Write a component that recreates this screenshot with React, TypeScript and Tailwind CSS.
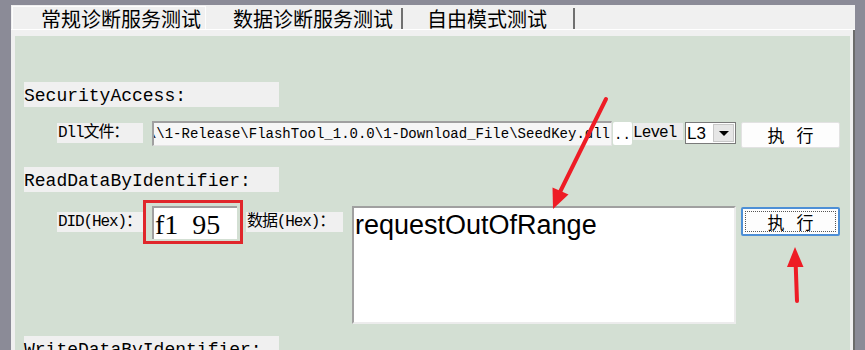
const mono = "font-['Liberation_Mono','Noto_Sans_CJK_SC',monospace]"
const cjk = "font-['Noto_Sans_CJK_SC','Liberation_Sans',sans-serif]"

function Heading({ text }: { text: string }) {
  return (
    <div className={`ml-[9px] w-[255px] h-[25px] bg-[#f0f0f0] flex items-center pt-[2px] text-[18px] leading-none text-black ${mono}`}>
      {text}
    </div>
  )
}

function Label({ text, width }: { text: string; width: number }) {
  return (
    <div
      className={`h-[20px] bg-[#f0f0f0] flex items-center pl-[1px] text-[16px] tracking-[-1.1px] leading-none text-black whitespace-nowrap ${mono}`}
      style={{ width }}
    >
      {text}
    </div>
  )
}

function RunButton({ focused }: { focused?: boolean }) {
  return (
    <div
      className={`w-[99px] rounded-[2px] bg-[#fdfdfd] flex items-center justify-center gap-[12px] text-[17px] text-black ${cjk} ${
        focused ? 'h-[29px] border-2 border-[#4d8fd6] outline outline-1 outline-dotted outline-offset-[-5px] outline-[#555]' : 'h-[26px] border border-[#e2e2e2]'
      }`}
    >
      <span>执</span>
      <span>行</span>
    </div>
  )
}

function Arrows() {
  return (
    <svg className="absolute inset-0 pointer-events-none" width={865} height={350}>
      <line x1={606} y1={99} x2={558} y2={196} stroke="#ee1c25" strokeWidth={4} strokeLinecap="round" />
      <polygon points="553,209 568.5,194.5 552.5,187.5" fill="#ee1c25" />
      <line x1={797} y1={301} x2={795.6} y2={262} stroke="#ee1c25" strokeWidth={4} strokeLinecap="round" />
      <polygon points="795,247 787,267 803.5,267" fill="#ee1c25" />
    </svg>
  )
}

export default function App() {
  return (
    <div className="relative w-[865px] h-[350px] overflow-hidden bg-[#8b8b97] pt-[5px] pl-[11px]">
      <div className="w-[844px] h-[345px] bg-[#f0f0f0] flex flex-col">
        {/* tabs */}
        <div className={`h-[27px] flex items-stretch border-b border-white text-[20px] text-black ${cjk}`}>
          <div className="ml-[1px] mt-[1px] w-[194px] border border-b-0 border-[#fdfdfd] flex items-center pl-[28px] pt-[1px] leading-none">
            常规诊断服务测试
          </div>
          <div className="w-[197px] flex items-center pl-[27px] pt-[1px] leading-none border-r-2 border-r-[#707070] mt-[3px]">
            数据诊断服务测试
          </div>
          <div className="w-[172px] flex items-center pl-[24px] pt-[1px] leading-none border-r-2 border-r-[#707070] mt-[3px]">
            自由模式测试
          </div>
        </div>

        {/* page body */}
        <div className="flex-1 flex pt-[6px] pl-[4px] border-r-2 border-r-[#6b6b6b]">
          <div className="w-[835px] h-full bg-[#d3dfd3] flex flex-col pt-[46px]">
            <Heading text="SecurityAccess:" />

            {/* dll row */}
            <div className="mt-[14px] ml-[42px] flex items-start">
              <div className="mt-[2px]">
                <Label text="Dll文件：" width={86} />
              </div>
              <div className={`ml-[9px] w-[460px] h-[25px] bg-[#f6f6f6] border-l-2 border-t-2 border-[#a0a0a0] border-r border-b border-r-[#e3e3e3] border-b-[#e3e3e3] flex items-center justify-end overflow-hidden whitespace-nowrap text-[14px] text-black ${mono}`}>
                <span className="pr-[1px]">D:\\1-Release\FlashTool_1.0.0\1-Download_File\SeedKey.dll</span>
              </div>
              <div className={`ml-[1px] mt-[1px] w-[19px] h-[23px] bg-white rounded-[2px] flex items-end justify-center pb-[3px] text-[14px] leading-none ${mono}`}>
                ..
              </div>
              <div className={`ml-[1px] mt-[2px] w-[50px] h-[17px] bg-[#ececec] flex items-center pt-[2px] text-[16px] tracking-[-0.9px] leading-none text-black ${mono}`}>
                Level
              </div>
              <div className="ml-[2px] mt-[1px] w-[51px] h-[22px] border border-[#7a7a7a] bg-white flex items-stretch">
                <div className="flex-1 flex items-center pl-[1px] text-[17px] leading-none text-black font-['Liberation_Sans',sans-serif]">L3</div>
                <div className="w-[21px] my-[1px] mr-[1px] bg-[#e6e6e6] border border-[#c8c8c8] flex items-center justify-center">
                  <div className="w-0 h-0 border-l-[5px] border-r-[5px] border-t-[5px] border-l-transparent border-r-transparent border-t-black" />
                </div>
              </div>
              <div className="ml-[5px] mt-[1px]">
                <RunButton />
              </div>
            </div>

            <div className="mt-[19px]">
              <Heading text="ReadDataByIdentifier:" />
            </div>

            {/* read row */}
            <div className="mt-[8px] ml-[42px] flex items-start">
              <div className="mt-[12px]">
                <Label text="DID(Hex)：" width={86} />
              </div>
              <div className="w-[100px] h-[44px] border-[3px] border-[#e0262b] pl-[6px] pt-[3px]">
                <div className="w-[85px] h-[33px] bg-white border-l-2 border-t-2 border-[#a0a0a0] flex items-center pl-[1px] pt-[2px] text-[28px] leading-none text-black whitespace-pre font-['Liberation_Serif',serif]">
                  f1  95
                </div>
              </div>
              <div className="ml-[3px] mt-[12px]">
                <Label text="数据(Hex)：" width={97} />
              </div>
              <div className="ml-[9px] mt-[6px] w-[384px] h-[118px] bg-white border-l-2 border-t-2 border-[#a0a0a0] border-r-2 border-b-2 border-r-[#ececec] border-b-[#ececec] pl-[1px] pt-[2px] text-[27px] leading-[30px] text-black font-['Liberation_Sans',sans-serif]">
                requestOutOfRange
              </div>
              <div className="ml-[5px] mt-[7px]">
                <RunButton focused />
              </div>
            </div>

            <div className="mt-[12px]">
              <Heading text="WriteDataByIdentifier:" />
            </div>
          </div>
        </div>
      </div>
      <Arrows />
    </div>
  )
}
